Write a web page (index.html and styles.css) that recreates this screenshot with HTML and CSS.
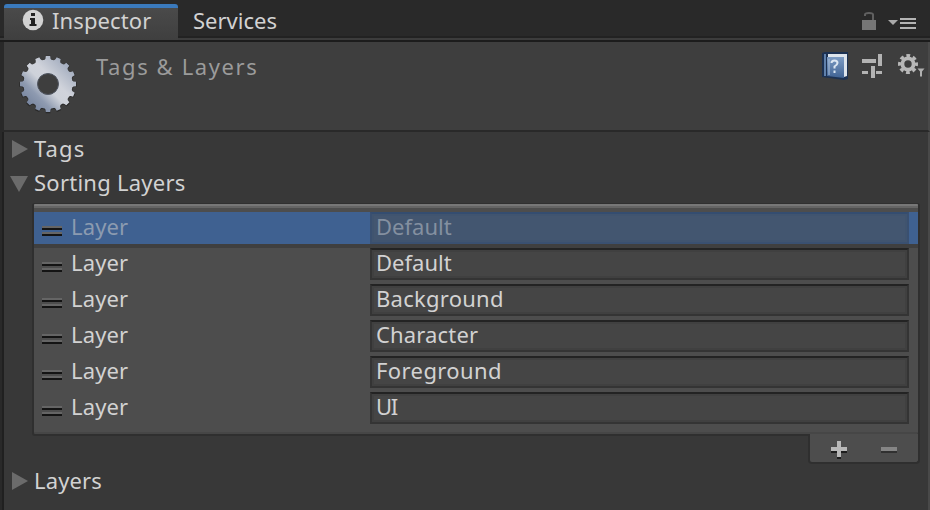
FILE: index.html
```html
<!DOCTYPE html>
<html lang="en">
<head>
<meta charset="utf-8">
<title>Inspector</title>
<link rel="stylesheet" href="styles.css">
</head>
<body>
<div class="window">
  <nav class="tabs">
    <div class="tab active">
      <svg class="info" width="22" height="22" viewBox="0 0 22 22"><circle cx="11" cy="11" r="10.3" fill="#d2d2d2"/><path d="M9 4h4v3H9zM8 9h5v6h1.500v2H7.500v-2H9v-4H8z" fill="#222"/></svg>
      <span class="t-inspector">Inspector</span>
    </div>
    <div class="tab"><span class="t-services">Services</span></div>
    <div class="tab-tools">
      <svg width="60" height="22" viewBox="0 0 60 22"><path d="M3 9h14v10H3z" fill="#767676"/><path d="M6 5V3.500q0-1.500 4-1.500t4 1.500V9" fill="none" stroke="#606060" stroke-width="2"/><path d="M29 9h10l-5 5z" fill="#aaa"/><path d="M41 8h16M41 12h16M41 17h16" stroke="#b4b4b4" stroke-width="2"/></svg>
    </div>
  </nav>
  <header class="header">
    <svg class="gear" width="60" height="60" viewBox="-30 -30 60 60">
      <defs>
        <linearGradient id="metal" gradientUnits="userSpaceOnUse" x1="-20" y1="20" x2="20" y2="-20"><stop offset="0" stop-color="#7886a0"/><stop offset=".22" stop-color="#8e9ab0"/><stop offset=".45" stop-color="#ced2da"/><stop offset=".62" stop-color="#d0d3db"/><stop offset="1" stop-color="#a2acbe"/></linearGradient>
        <g id="teeth"><path id="tooth" d="M-3.600-24Q-2.200-25-2.200-28H2.200Q2.200-25 3.600-24V24Q2.200 25 2.200 28H-2.200Q-2.200 25-3.600 24z"/><use href="#tooth" transform="rotate(22.500)"/><use href="#tooth" transform="rotate(45)"/><use href="#tooth" transform="rotate(67.500)"/><use href="#tooth" transform="rotate(90)"/><use href="#tooth" transform="rotate(112.500)"/><use href="#tooth" transform="rotate(135)"/><use href="#tooth" transform="rotate(157.500)"/><circle r="24.500"/></g>
        <mask id="gearmask"><use href="#teeth" fill="#fff"/><circle r="10.500" fill="#000"/></mask>
      </defs>
      <use href="#teeth" fill="#292929" transform="translate(0 .5) scale(1.025)"/>
      <g mask="url(#gearmask)"><path d="M-30-30H30V30H-30z" fill="url(#metal)"/></g>
      <circle r="10.500" fill="#3e3e3e" stroke="#565c68" stroke-width="1"/>
    </svg>
    <h1 class="t-title">Tags &amp; Layers</h1>
    <div class="header-tools">
      <svg width="108" height="34" viewBox="818 48 108 34">
        <defs><linearGradient id="book" x1="0" y1="0" x2="0" y2="1"><stop offset="0" stop-color="#7d9cc4"/><stop offset="1" stop-color="#3f6293"/></linearGradient></defs>
        <path d="M822 53l3-1h23v27l-4 1-22-3z" fill="#1c3152"/><path d="M824 54h2v22h-2z" fill="#5f80ab"/><path d="M828 54h19v22l-3 1V57h-16z" fill="#dde4ec"/><path d="M827 57h17v21l-17-2z" fill="url(#book)"/><path d="M829 59v16" stroke="#afc3dc" stroke-width="1"/>
        <path d="M831.500 63q0-2.500 3-2.500t3 2.500q0 1.500-3 3.500v2M834.500 70.500v2.500" stroke="#dbe6f2" stroke-width="2" fill="none"/>
        <path d="M862 59h14v4h-14zM878 54h4v12h-4zM862 71h6v3h-6zM876 71h6v3h-6zM871 66h4v12h-4z" fill="#b3b3b3"/>
        <g fill="none" stroke="#b8b8b8"><circle cx="908" cy="64" r="5.600" stroke-width="3.800"/><circle cx="908" cy="64" r="8.300" stroke-width="3.400" stroke-dasharray="3.700 2.819" stroke-dashoffset="1.850"/></g>
        <path d="M917.500 68.500h7l-2.500 3v5h-2v-5z" fill="#b0b0b0"/>
      </svg>
    </div>
  </header>
  <main class="body">
    <div class="fold"><i class="arrow"></i><span class="t-tags">Tags</span></div>
    <div class="fold"><i class="arrow open"></i><span class="t-sorting">Sorting Layers</span></div>
    <section class="list">
      <div class="row selected"><i class="handle"></i><span class="label">Layer</span><div class="field t-default">Default</div></div>
      <div class="row"><i class="handle"></i><span class="label">Layer</span><div class="field t-default">Default</div></div>
      <div class="row"><i class="handle"></i><span class="label">Layer</span><div class="field t-background">Background</div></div>
      <div class="row"><i class="handle"></i><span class="label">Layer</span><div class="field t-character">Character</div></div>
      <div class="row"><i class="handle"></i><span class="label">Layer</span><div class="field t-foreground">Foreground</div></div>
      <div class="row"><i class="handle"></i><span class="label">Layer</span><div class="field t-ui">UI</div></div>
    </section>
    <div class="list-footer">
      <svg width="108" height="28" viewBox="0 0 108 28"><path d="M21 16h16v3h-6v6h-4v-6h-6z" fill="#1d1d1d"/><path d="M27 7h4v6h6v4h-6v6h-4v-6h-6v-4h6z" fill="#b8b8b8"/><path d="M71 17h16v2H71z" fill="#303030"/><path d="M71 13h16v4H71z" fill="#858585"/></svg>
    </div>
    <div class="fold last"><i class="arrow"></i><span class="t-layers">Layers</span></div>
  </main>
</div>
</body>
</html>
```
FILE: styles.css
```css
* { box-sizing: border-box; }
body {
  margin: 0;
  width: 930px;
  height: 510px;
  overflow: hidden;
  background: #292929;
  font: 22px/32px "Noto Sans", sans-serif;
  color: #d2d2d2;
}
span, h1, .field { white-space: nowrap; }
.window { height: 510px; display: flex; flex-direction: column; }
.tabs {
  height: 42px;
  display: flex;
  padding: 4px 0 0 4px;
  background: linear-gradient(#292929 0 36px, #222 36px 38px, #3c3c3c 38px 40px, #1c1c1c 40px);
}
.tab { height: 36px; padding-left: 15px; line-height: 32px; }
.tab.active {
  width: 174px;
  height: 36px;
  display: flex;
  gap: 8px;
  padding-left: 18px;
  line-height: 24px;
  border-top: 4px solid #3a79bb;
  border-radius: 3px 3px 0 0;
  background: linear-gradient(#4a4a4a, #3f3f3f);
}
.info { margin-top: 1px; }
.tab-tools { margin: 7px 11px 0 auto; height: 22px; }
.tab-tools svg, .header-tools svg, .list-footer svg { display: block; }
.header {
  height: 90px;
  margin-left: 2px;
  display: flex;
  border-left: 2px solid #292929;
  border-right: 2px solid #494949;
  border-bottom: 2px solid #292929;
  background: #3e3e3e;
}
.gear { margin: 12px 0 0 14px; }
h1 { margin: 8px 0 0 18px; font-size: 22px; font-weight: 400; color: #9b9b9b; }
.header-tools { margin: 6px 2px 0 auto; }
.body {
  flex: 1;
  margin-left: 2px;
  padding-left: 5px;
  border-left: 2px solid #202020;
  border-right: 2px solid #494949;
  background: #383838;
}
.fold { height: 34px; display: flex; align-items: center; }
.fold span { padding-bottom: 2px; }
.arrow { width: 25px; height: 18px; padding-left: 3px; }
.arrow::before {
  content: "";
  display: block;
  width: 16px;
  height: 18px;
  background: #6b6b6b;
  clip-path: polygon(0 0, 100% 50%, 0 100%);
}
.arrow.open { height: 14px; padding-left: 1px; }
.arrow.open::before { width: 18px; height: 16px; clip-path: polygon(0 0, 100% 0, 50% 100%); }
.list {
  width: 888px;
  height: 233px;
  margin: 3px 0 0 23px;
  padding-top: 9px;
  border: solid #2f2f2f;
  border-width: 0 2px 2px;
  border-radius: 3px;
  background: linear-gradient(#303030 0 1px, #777 1px 3px, #656565 3px 5px, #4d4d4d 5px 229px, #464646 229px);
}
.row { height: 32px; margin-bottom: 4px; display: flex; padding-left: 8px; }
.row.selected { background: #3f6191; color: #8c9bb0; box-shadow: 0 4px #3f3f3f; }
.handle {
  width: 20px;
  height: 10px;
  margin: 14px 9px 0 0;
  background: linear-gradient(#656565 0 2px, #141414 2px 4px, transparent 4px 6px, #656565 6px 8px, #141414 8px);
}
.label { width: 299px; line-height: 28px; letter-spacing: 0.15px; }
.field {
  width: 539px;
  height: 32px;
  padding-left: 4px;
  border: 2px solid #343434;
  border-top-color: #232323;
  line-height: 24px;
  background: #454545;
  box-shadow: inset 0 0 0 2px #404040;
}
.selected .field { color: #8490a0; border-color: #3a5070; border-top-color: #344d70; background: #435670; box-shadow: inset 0 0 0 2px #40546f; }
.t-title { letter-spacing: 1.6px; }
.t-tags { letter-spacing: 1.1px; }
.t-inspector { letter-spacing: 0.1px; }
.t-sorting { letter-spacing: 0.25px; }
.t-layers { letter-spacing: 0.15px; }
.t-background { letter-spacing: 0.25px; }
.t-character { letter-spacing: 0.15px; }
.t-foreground { letter-spacing: 0.4px; }
.t-ui { letter-spacing: -1.3px; }
.list-footer {
  width: 112px;
  height: 30px;
  margin: -2px 8px 0 auto;
  position: relative;
  border: 2px solid #2f2f2f;
  border-top: 0;
  border-radius: 0 0 4px 4px;
  background: #4d4d4d;
}
.fold.last { margin-top: 0; }
```
